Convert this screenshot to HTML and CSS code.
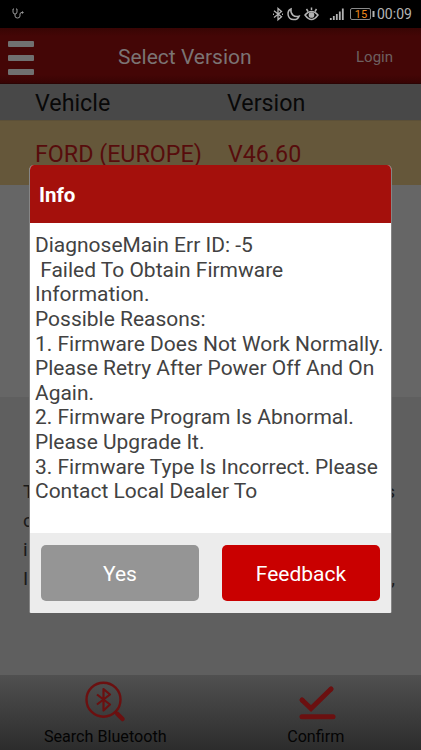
FILE: index.html
```html
<!DOCTYPE html>
<html lang="en">
<head>
<meta charset="utf-8">
<title>Select Version</title>
<link rel="stylesheet" href="styles.css">
</head>
<body>
<div class="screen">
  <div class="status">
    <svg class="steth" width="12" height="12" viewBox="0 0 12 12" fill="none" stroke="#999" stroke-width="1"><path d="M2 1H1v3q0 2 2 2t2-2V1H4M3 6v2q0 2 2.500 2T8 8V6q0-1.500 2-1.500"/><circle cx="10.500" cy="4.500" r=".7" fill="#999"/></svg>
    <div class="status-right">
      <svg width="104" height="16" viewBox="0 0 104 16" fill="none" stroke="#b4b4b4" stroke-width="1.300">
        <path d="M2 4.800l7.500 6-3.500 3V2.500l3.500 3-7.500 6"/>
        <path d="M1 8.200h1M10 8.200h1" stroke-width="1.400"/>
        <path d="M19 3C14.500 5 15 13 21.500 13.600c3 .2 4.800-1.400 5.600-3.400-5 1.500-9-2-8.100-7.200Z" stroke-width="1.500"/>
        <path d="M33 9q6.500-7 13 0-6.500 9-13 0ZM34.500 3l1.500 2.500M39.500 1.500V4M44.500 3L43 5.500" stroke-width="1.500"/>
        <circle cx="39.500" cy="9" r="2.200" fill="#b4b4b4"/>
        <path d="M58.800 12v2M61.800 10v4M64.800 8v6M67.800 5.500V14M70.800 2.500V14" stroke-width="1.800"/>
        <rect x="78.500" y="2.500" width="20" height="11" rx="1.500" stroke="#8a8a8a" stroke-width="1"/>
        <path d="M101.500 5v6" stroke-width="2"/>
        <text x="88.900" y="12" class="battery">15</text>
      </svg>
      <span class="clock">00:09</span>
    </div>
  </div>
  <header class="bar">
    <div class="menu"><i></i><i></i><i></i></div>
    <h1>Select Version</h1>
    <span class="login">Login</span>
  </header>
  <div class="columns"><span>Vehicle</span><span>Version</span></div>
  <div class="vehicle"><span>FORD (EUROPE)</span><span>V46.60</span></div>
  <div class="list"></div>
  <div class="notes">
    <p><span>T</span><span>s</span></p>
    <p><span>c</span></p>
    <p><span>i</span></p>
    <p><span>I</span><span>,</span></p>
  </div>
  <footer class="actions">
    <div class="action">
      <svg width="44" height="44" viewBox="0 0 44 44" fill="none" stroke="#6b1010" stroke-linejoin="round">
        <circle cx="20.500" cy="19.700" r="17" stroke-width="2.400"/>
        <path d="M32.500 32.500l1.500 1.500" stroke-width="2.500"/>
        <path d="M34.500 34l5 5" stroke-width="4.500" stroke-linecap="round"/>
        <path d="M14 14.500l13 10-6.500 6V9l6.500 5.500-13 10" stroke-width="2.200"/>
      </svg>
      <span>Search Bluetooth</span>
    </div>
    <div class="action">
      <svg width="44" height="44" viewBox="0 0 44 44" fill="none" stroke="#6b1010">
        <path d="M8 20l9 8.500L37 9" stroke-width="5"/>
        <path d="M8 36.700h31" stroke-width="5" stroke-linecap="round"/>
        <path d="M8 20l.1.100M37 9l.1-.1" stroke-width="5" stroke-linecap="round"/>
      </svg>
      <span>Confirm</span>
    </div>
  </footer>
  <section class="dialog" role="dialog">
    <h2>Info</h2>
    <div class="message">DiagnoseMain Err ID: -5
 Failed To Obtain Firmware
Information.
Possible Reasons:
1. Firmware Does Not Work Normally.
Please Retry After Power Off And On
Again.
2. Firmware Program Is Abnormal.
Please Upgrade It.
3. Firmware Type Is Incorrect. Please
Contact Local Dealer To</div>
    <div class="buttons"><button class="yes">Yes</button><button class="feedback">Feedback</button></div>
  </section>
</div>
</body>
</html>
```

FILE: styles.css
```css
* { box-sizing: border-box; }
body { margin: 0; font-family: Roboto, sans-serif; background: #000; }
h1, h2, p { margin: 0; font-weight: 400; }
.screen { position: relative; width: 421px; height: 750px; overflow: hidden; display: flex; flex-direction: column; background: #666; }
.status { height: 28px; flex: none; background: #000; display: flex; align-items: center; justify-content: space-between; padding: 0 8px 0 12px; }
.status-right { display: flex; align-items: center; gap: 1px; }
.battery { fill: #f08a1c; stroke: none; font-size: 11px; text-anchor: middle; }
.clock { width: 36px; color: #b4b4b4; font-size: 14px; line-height: 16px; white-space: nowrap; }
.bar { height: 56px; flex: none; display: grid; grid-template-columns: 118px 1fr 65px; align-items: center; background: linear-gradient(#380504, #440606 15%, #440606 85%, #380404); border-bottom: 1px solid #2c0404; }
.menu { display: flex; flex-direction: column; gap: 8px; padding: 4px 0 0 8px; }
.menu i { width: 26px; height: 6px; border-radius: 1px; background: #707070; }
.bar h1 { font-size: 21px; color: #7b7474; padding-top: 3px; }
.login { font-size: 15px; color: #6e6060; padding-top: 2px; }
.columns, .vehicle { display: grid; grid-template-columns: 192px 1fr; padding-left: 35px; flex: none; font-size: 23.250px; }
.columns { height: 36px; line-height: 38px; background: #484848; color: #080808; }
.vehicle { height: 65px; line-height: 66px; background: #65573a; color: #570c0c; border-top: 1px solid #5c5038; }
.vehicle span + span { padding-left: 1px; }
.list { height: 212px; flex: none; background: #666; }
.notes { flex: 1; background: #5f5f5f; padding: 81px 26px 0 23px; color: #1a1a1a; font-size: 19px; line-height: 28.900px; }
.notes p { display: flex; justify-content: space-between; }
.actions { height: 75px; flex: none; display: grid; grid-template-columns: 1fr 1fr; background: linear-gradient(#505050, #2c2c2c); }
.action { display: flex; flex-direction: column; align-items: center; padding-top: 5px; font-size: 16.150px; line-height: 26px; color: #040404; }
.dialog { position: absolute; left: 29px; top: 165px; width: 363px; height: 448px; border: solid #858585; border-width: 0 1px; border-radius: 5px 5px 2px 2px; overflow: hidden; background: #fff; display: flex; flex-direction: column; }
.dialog h2 { height: 58px; flex: none; background: #a4100c; color: #fff; font-size: 20.500px; font-weight: 700; line-height: 60px; padding-left: 9px; }
.message { flex: 1; padding: 10px 5px 0; white-space: pre; font-size: 20.970px; line-height: 24.620px; color: #424242; }
.buttons { height: 80px; flex: none; background: #ececec; display: flex; justify-content: space-between; padding: 12px 11px; }
.buttons button { width: 158px; height: 56px; border: 0; border-radius: 5px; color: #fff; font: 21px Roboto, sans-serif; padding: 2px 0 0; }
.yes { background: #959595; }
.buttons .feedback { background: #c90000; }
```
